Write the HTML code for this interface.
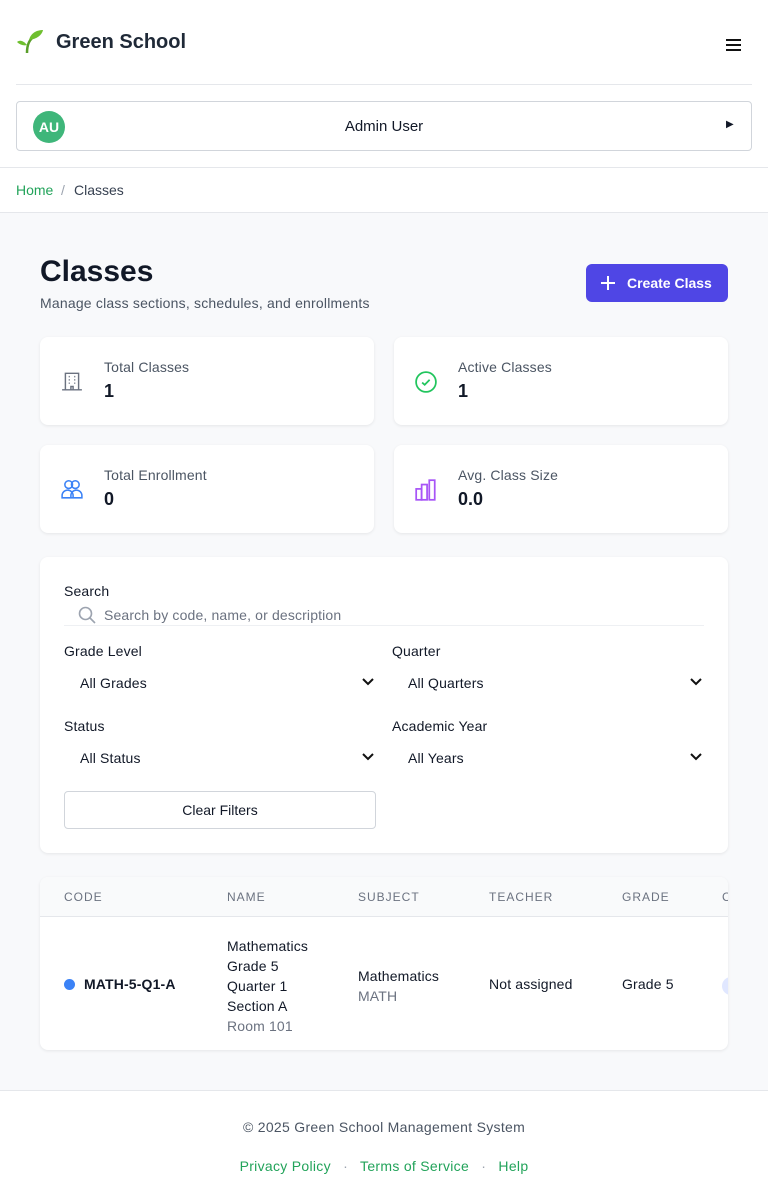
<!DOCTYPE html>
<html><head><meta charset="utf-8"><style>
*{box-sizing:border-box;margin:0;padding:0}
body{width:768px;height:1201px;font-family:"Liberation Sans",sans-serif;background:#f8f9fb;color:#111827;position:relative;overflow:hidden}
.abs{position:absolute}
.top{left:0;top:0;width:768px;height:168px;background:#fff;border-bottom:1px solid #e5e7eb}
.bc{left:0;top:168px;width:768px;height:45px;background:#fff;border-bottom:1px solid #e5e7eb;font-size:14px}
.card{background:#fff;border-radius:8px;box-shadow:0 1px 3px rgba(0,0,0,.08)}
.lbl{font-size:14px;color:#4b5563;letter-spacing:.15px}
.val{font-size:18px;font-weight:bold;color:#111827}
.fl{font-size:14px;color:#111827;letter-spacing:.15px}
.sel{font-size:14px;color:#111827;letter-spacing:.15px}
.chev{width:12px;height:8px}
.th{font-size:12px;color:#6b7280;letter-spacing:1px;top:890px}
.td{font-size:14px;color:#111827;letter-spacing:.15px}
.foot{left:0;top:1090px;width:768px;height:111px;background:#fff;border-top:1px solid #e5e7eb;font-size:14px;letter-spacing:.3px}
</style></head><body>
<div class="abs top">
 <svg class="abs" style="left:16px;top:29px" width="28" height="26" viewBox="0 0 28 26"><path d="M11 24 C11 16 13 10 20 6" stroke="#5a9e2a" stroke-width="2.5" fill="none"/><path d="M13 11 C15 3 22 1 27 1 C26 6 21 10 13 11Z" fill="#6fbf2f"/><path d="M11 16 C7 11 3 11 1 13 C4 16 8 17 11 16Z" fill="#6fbf2f"/></svg>
 <div class="abs" style="left:56px;top:31px;font-size:20px;font-weight:bold;color:#1f2937">Green School</div>
 <div class="abs" style="left:726px;top:39px;width:15px"><div style="height:2px;background:#111;margin-bottom:3px"></div><div style="height:2px;background:#111;margin-bottom:3px"></div><div style="height:2px;background:#111"></div></div>
 <div class="abs" style="left:16px;top:84px;width:736px;height:1px;background:#e5e7eb"></div>
 <div class="abs" style="left:16px;top:101px;width:736px;height:50px;border:1px solid #d1d5db;border-radius:4px">
  <div class="abs" style="left:16px;top:9px;width:32px;height:32px;border-radius:50%;background:#3fb67a;color:#fff;font-size:14px;font-weight:bold;text-align:center;line-height:32px">AU</div>
  <div class="abs" style="left:0;width:734px;top:16px;text-align:center;font-size:15px">Admin User</div>
  <div class="abs" style="left:709px;top:17px;font-size:10px">&#9654;</div>
 </div>
</div>
<div class="abs bc"><span class="abs" style="left:16px;top:14px;color:#22a35a">Home</span><span class="abs" style="left:61px;top:14px;color:#9ca3af">/</span><span class="abs" style="left:74px;top:14px;color:#374151">Classes</span></div>

<div class="abs" style="left:40px;top:255px;font-size:30px;font-weight:bold">Classes</div>
<div class="abs" style="left:40px;top:295px;font-size:14px;color:#4b5563;letter-spacing:.2px">Manage class sections, schedules, and enrollments</div>
<div class="abs" style="left:586px;top:264px;width:142px;height:38px;background:#4f46e5;border-radius:6px;color:#fff;font-size:14px;font-weight:bold;line-height:38px;padding-left:41px">Create Class
 <svg class="abs" style="left:14px;top:11px" width="16" height="16" viewBox="0 0 16 16"><path d="M8 1v14M1 8h14" stroke="#fff" stroke-width="2"/></svg></div>

<div class="abs card" style="left:40px;top:337px;width:334px;height:88px"><svg class="abs" style="left:21px;top:33px" width="22" height="22" viewBox="0 0 20 20" fill="none" stroke="#6b7280" stroke-width="1.3"><path d="M4 18V3h12v15M1 18h18M7 6h1M12 6h1M7 9h1M12 9h1M7 12h1M12 12h1M9 18v-3h2v3"/></svg><div class="abs lbl" style="left:64px;top:22px">Total Classes</div><div class="abs val" style="left:64px;top:44px">1</div></div>
<div class="abs card" style="left:394px;top:337px;width:334px;height:88px"><svg class="abs" style="left:21px;top:34px" width="22" height="22" viewBox="0 0 20 20" fill="none" stroke="#22c55e" stroke-width="1.6"><circle cx="10" cy="10" r="9"/><path d="M6.5 10.5l2.3 2 4.5-4.5"/></svg><div class="abs lbl" style="left:64px;top:22px">Active Classes</div><div class="abs val" style="left:64px;top:44px">1</div></div>
<div class="abs card" style="left:40px;top:445px;width:334px;height:88px"><svg class="abs" style="left:21px;top:33px" width="22" height="22" viewBox="0 0 20 20" fill="none" stroke="#3b82f6" stroke-width="1.4"><circle cx="7" cy="6" r="3.5"/><circle cx="13" cy="6" r="3.5"/><path d="M1 18v-2a5 5 0 0110 0v2zM9 18v-2a5 5 0 0110 0v2z"/></svg><div class="abs lbl" style="left:64px;top:22px">Total Enrollment</div><div class="abs val" style="left:64px;top:44px">0</div></div>
<div class="abs card" style="left:394px;top:445px;width:334px;height:88px"><svg class="abs" style="left:21px;top:33px" width="22" height="24" viewBox="0 0 20 22" fill="none" stroke="#a855f7" stroke-width="1.6"><rect x="1" y="10" width="5" height="10"/><rect x="6" y="6" width="5" height="14"/><rect x="13" y="2" width="5" height="18"/></svg><div class="abs lbl" style="left:64px;top:22px">Avg. Class Size</div><div class="abs val" style="left:64px;top:44px">0.0</div></div>

<div class="abs card" style="left:40px;top:557px;width:688px;height:296px">
 <div class="abs fl" style="left:24px;top:26px">Search</div>
 <div class="abs" style="left:24px;top:47px;width:640px;height:22px;border-bottom:1px solid #eef0f3"></div>
 <svg class="abs" style="left:38px;top:49px" width="18" height="18" viewBox="0 0 18 18" fill="none" stroke="#9ca3af" stroke-width="1.6"><circle cx="7.5" cy="7.5" r="6"/><path d="M12 12l5 5"/></svg>
 <div class="abs" style="left:64px;top:50px;font-size:14px;color:#6b7280;letter-spacing:.15px">Search by code, name, or description</div>
 <div class="abs fl" style="left:24px;top:86px">Grade Level</div>
 <div class="abs fl" style="left:352px;top:86px">Quarter</div>
 <div class="abs sel" style="left:40px;top:118px">All Grades</div>
 <div class="abs sel" style="left:368px;top:118px">All Quarters</div>
 <div class="abs fl" style="left:24px;top:161px">Status</div>
 <div class="abs fl" style="left:352px;top:161px">Academic Year</div>
 <div class="abs sel" style="left:40px;top:193px">All Status</div>
 <div class="abs sel" style="left:368px;top:193px">All Years</div>
 <svg class="abs chev" style="left:322px;top:121px" viewBox="0 0 12 8"><path d="M1 1l5 5 5-5" stroke="#111" stroke-width="2" fill="none"/></svg>
 <svg class="abs chev" style="left:650px;top:121px" viewBox="0 0 12 8"><path d="M1 1l5 5 5-5" stroke="#111" stroke-width="2" fill="none"/></svg>
 <svg class="abs chev" style="left:322px;top:196px" viewBox="0 0 12 8"><path d="M1 1l5 5 5-5" stroke="#111" stroke-width="2" fill="none"/></svg>
 <svg class="abs chev" style="left:650px;top:196px" viewBox="0 0 12 8"><path d="M1 1l5 5 5-5" stroke="#111" stroke-width="2" fill="none"/></svg>
 <div class="abs" style="left:24px;top:234px;width:312px;height:38px;border:1px solid #d1d5db;border-radius:4px;text-align:center;line-height:36px;font-size:14px">Clear Filters</div>
</div>

<div class="abs card" style="left:40px;top:877px;width:688px;height:173px;overflow:hidden">
 <div class="abs" style="left:0;top:0;width:688px;height:40px;background:#f9fafb;border-bottom:1px solid #e5e7eb"></div>
 <div class="abs" style="left:682px;top:100px;width:20px;height:18px;border-radius:9px;background:#e0e7ff"></div>
</div>
<div class="abs th" style="left:64px">CODE</div><div class="abs th" style="left:227px">NAME</div><div class="abs th" style="left:358px">SUBJECT</div><div class="abs th" style="left:489px">TEACHER</div><div class="abs th" style="left:622px">GRADE</div><div class="abs th" style="left:722px;width:6px;overflow:hidden">C</div>
<div class="abs" style="left:64px;top:979px;width:11px;height:11px;border-radius:50%;background:#3b82f6"></div>
<div class="abs td" style="left:84px;top:976px;font-weight:bold">MATH-5-Q1-A</div>
<div class="abs td" style="left:227px;top:936px;line-height:20px">Mathematics<br>Grade 5<br>Quarter 1<br>Section A<br><span style="color:#6b7280">Room 101</span></div>
<div class="abs td" style="left:358px;top:966px;line-height:20px">Mathematics<br><span style="color:#6b7280">MATH</span></div>
<div class="abs td" style="left:489px;top:976px">Not assigned</div>
<div class="abs td" style="left:622px;top:976px">Grade 5</div>

<div class="abs foot">
 <div class="abs" style="left:0;width:768px;top:28px;text-align:center;color:#4b5563">© 2025 Green School Management System</div>
 <div class="abs" style="left:0;width:768px;top:67px;text-align:center;color:#22a35a">Privacy Policy <span style="color:#9ca3af;margin:0 8px">·</span> Terms of Service <span style="color:#9ca3af;margin:0 8px">·</span> Help</div>
</div>
</body></html>
